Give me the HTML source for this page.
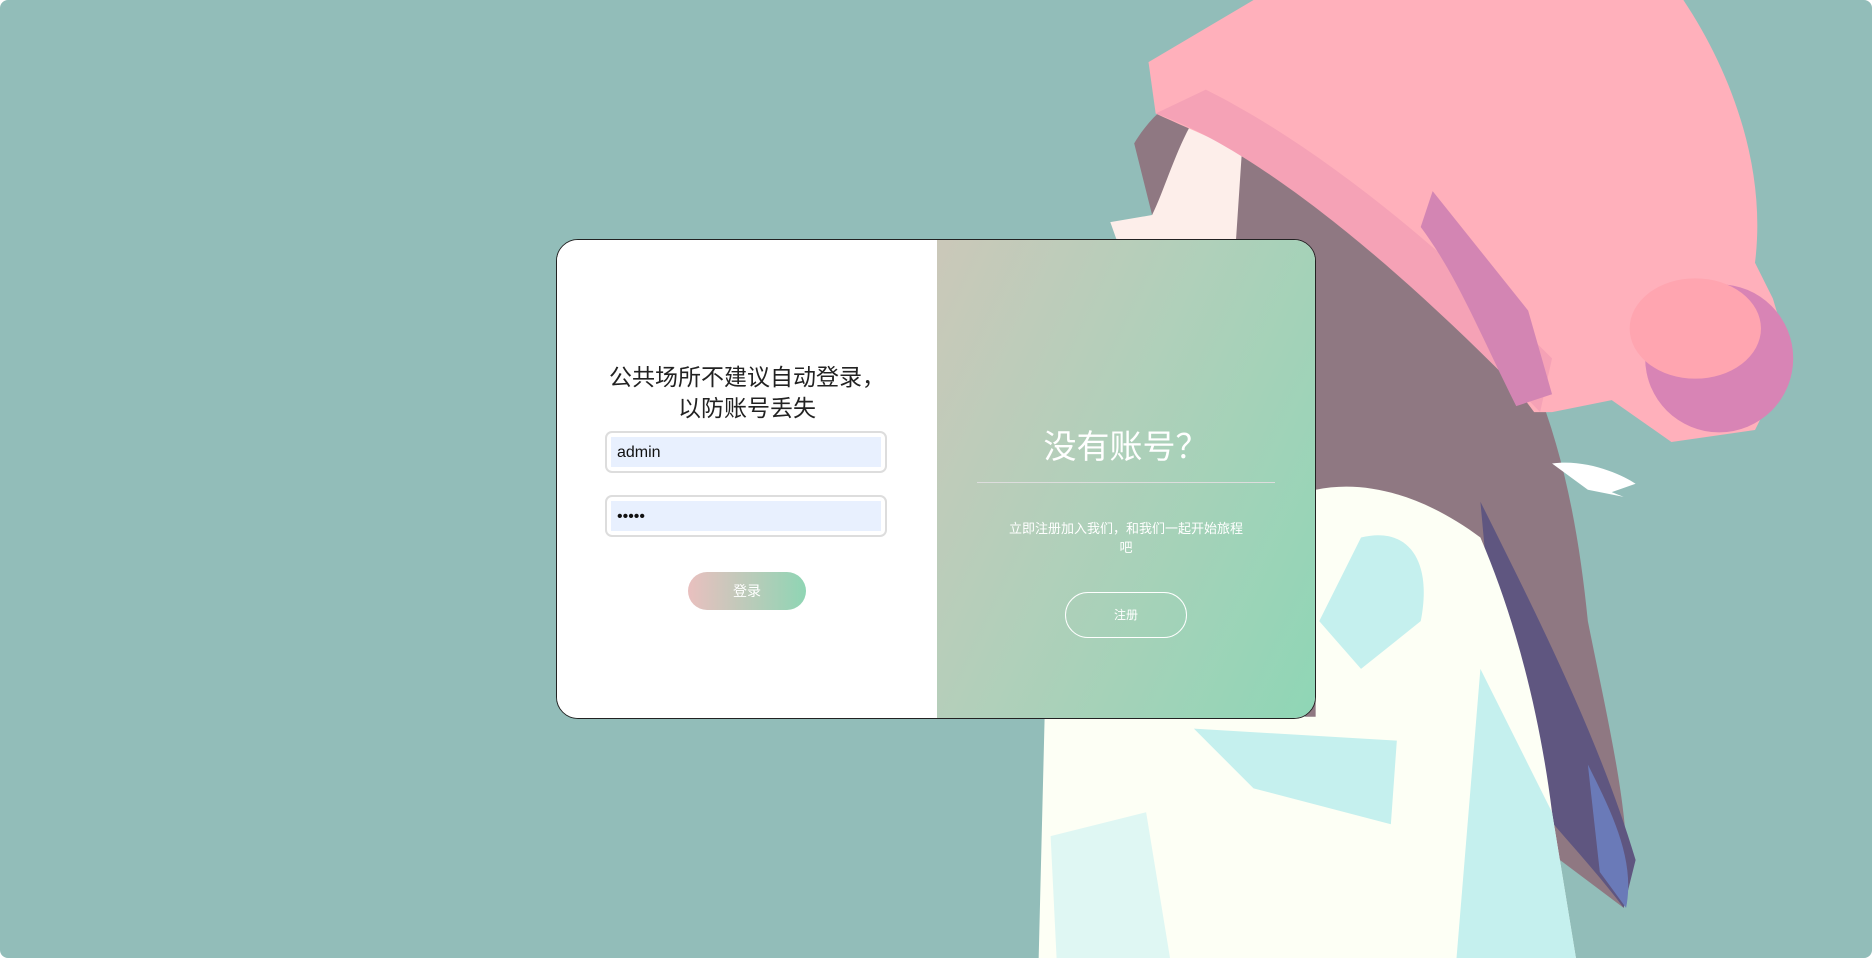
<!DOCTYPE html>
<html><head><meta charset="utf-8">
<style>
html,body{margin:0;padding:0;width:1872px;height:958px;overflow:hidden;background:#fff}
.bg{position:absolute;left:0;top:0;width:1872px;height:958px;background:#92bdb9;border-radius:8px;overflow:hidden}
svg.girl{position:absolute;left:0;top:0}
.card{position:absolute;left:556px;top:239px;width:758px;height:478px;border:1px solid #222;border-radius:22px;overflow:hidden;background:#fff;font-family:"Liberation Sans","Noto Sans CJK SC",sans-serif}
.left{position:absolute;left:0;top:0;width:380px;height:478px;background:#fff}
.right{position:absolute;left:380px;top:0;width:378px;height:478px;background:linear-gradient(115deg,#cbc8b9 0%,#b3cfba 40%,#8fd6b6 100%)}
.t1{position:absolute;left:0;width:380px;text-align:center;font-size:23px;color:#222;line-height:31px;top:122px}
.inp{position:absolute;left:48px;width:282px;height:42px;border:2px solid #ddd;border-radius:7px;box-sizing:border-box}
.inp div{position:absolute;left:4px;top:4px;right:4px;bottom:4px;background:#e8f0fe;font-size:16px;line-height:32px;padding-left:6px;color:#111}
.btn{position:absolute;left:131px;top:332px;width:118px;height:38px;border-radius:19px;background:linear-gradient(90deg,#e9c0bf,#8fd5b4);color:#fff;font-size:14px;text-align:center;line-height:38px}
.t2{position:absolute;left:0;width:378px;text-align:center;color:#fff;font-size:33px;top:180px}
.line{position:absolute;left:40px;width:298px;top:242px;height:1px;background:#ddd}
.t3{position:absolute;left:40px;width:298px;text-align:center;color:#fff;font-size:13px;line-height:19px;top:279px}
.reg{position:absolute;left:128px;top:352px;width:122px;height:46px;border:1px solid #fff;border-radius:23px;box-sizing:border-box;color:#fff;font-size:12px;text-align:center;line-height:44px}
</style></head><body>
<div class="bg">
<svg class="girl" width="1872" height="958" viewBox="0 0 1568 802" preserveAspectRatio="none">
 <path d="M950 120 C980 70 1030 60 1080 80 L1250 250 C1300 330 1320 420 1330 520 C1350 620 1370 700 1360 760 L1280 700 L1100 620 L1000 320 Z" fill="#8f7882"/>
 <path d="M1240 420 C1290 520 1340 620 1370 720 L1360 760 C1330 720 1290 680 1260 640 Z" fill="#5f5680"/>
 <path d="M1330 640 C1350 680 1370 720 1362 760 L1340 730 Z" fill="#6a7ab8"/>
 <path d="M1000 100 C985 125 975 160 965 180 L930 186 L935 200 L1035 205 L1040 130 Z" fill="#fdeeea"/>
 <path d="M962 52 L1050 0 L1410 0 C1450 60 1480 140 1470 220 L1485 250 L1500 300 L1470 360 L1400 370 L1350 335 L1300 345 L1285 345 C1230 270 1150 200 1080 150 C1040 125 1000 110 968 95 Z" fill="#ffb0bb"/>
 <path d="M968 95 C1040 120 1150 200 1290 345 L1300 300 C1200 200 1100 120 1010 75 Z" fill="#f5a2b6"/>
 <ellipse cx="1440" cy="300" rx="62" ry="62" fill="#d884b5"/>
 <ellipse cx="1420" cy="275" rx="55" ry="42" fill="#ffa5b0"/>
 <path d="M1200 160 L1280 260 L1300 330 L1270 340 C1240 280 1220 230 1190 190 Z" fill="#d385b3"/>
 <path d="M870 802 L875 600 L1102 600 L1102 410 C1150 400 1200 420 1240 450 C1270 520 1290 600 1300 680 L1320 802 Z" fill="#fdfff5"/>
 <path d="M1140 450 C1180 440 1200 470 1190 520 L1140 560 L1105 520 Z" fill="#c5f0ee"/>
 <path d="M1000 610 L1170 620 L1165 690 L1050 660 Z" fill="#c5f0ee"/>
 <path d="M1240 560 L1300 680 L1320 802 L1220 802 Z" fill="#c5f0ee"/>
 <path d="M880 700 L960 680 L980 802 L885 802 Z" fill="#dff7f3"/>
 <path d="M1300 388 C1330 384 1360 398 1370 405 L1350 412 L1360 416 L1330 410 Z" fill="#fff"/>
</svg>
<div class="card">
 <div class="left">
  <div class="t1">公共场所不建议自动登录，<br>以防账号丢失</div>
  <div class="inp" style="top:191px"><div>admin</div></div>
  <div class="inp" style="top:255px"><div>•••••</div></div>
  <div class="btn">登录</div>
 </div>
 <div class="right">
  <div class="t2">没有账号？</div>
  <div class="line"></div>
  <div class="t3">立即注册加入我们，和我们一起开始旅程<br>吧</div>
  <div class="reg">注册</div>
 </div>
</div>
</div>
</body></html>
